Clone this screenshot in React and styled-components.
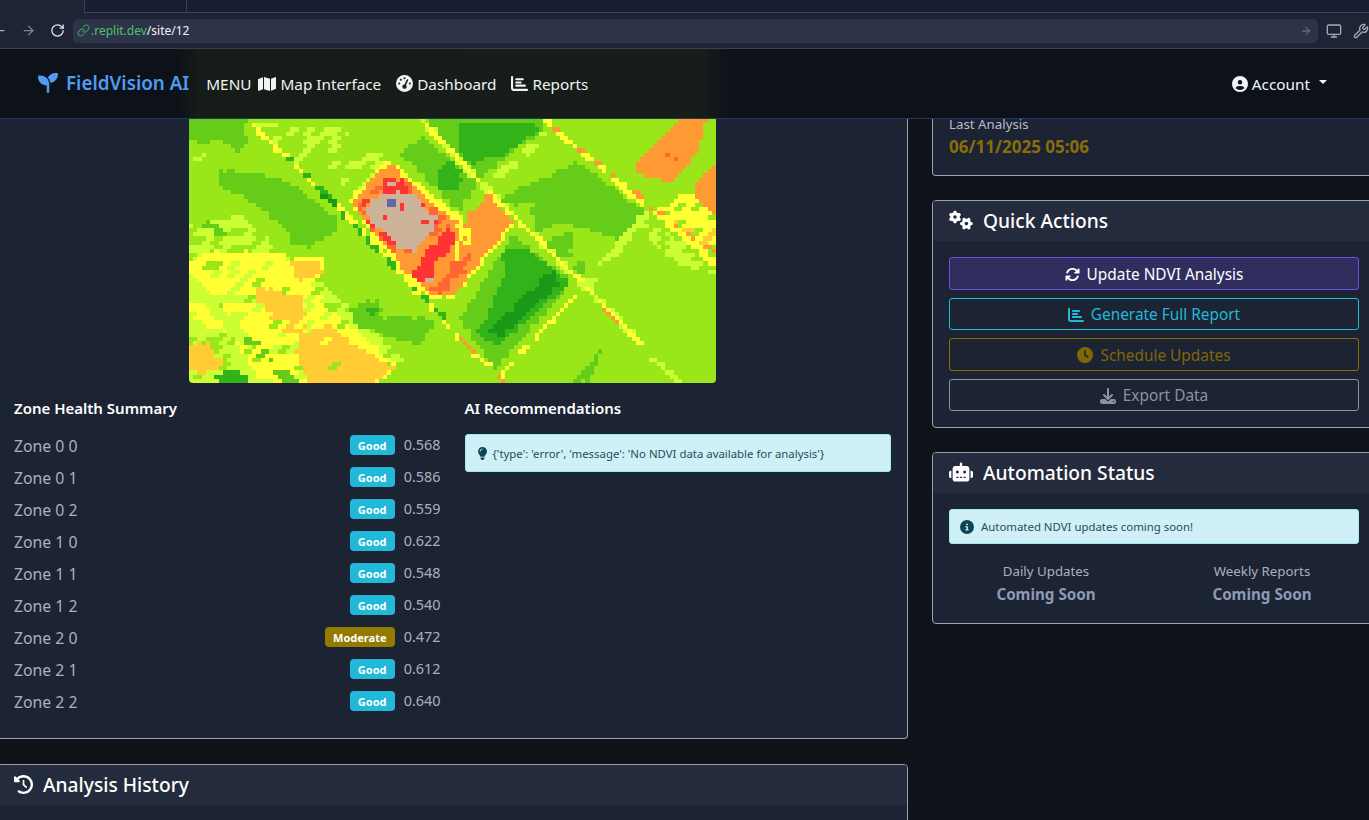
import React from "react";
import styled, { createGlobalStyle } from "styled-components";
import {
  FaSeedling, FaMap, FaGaugeHigh, FaChartBar, FaCircleUser, FaGears, FaArrowsRotate,
  FaClock, FaDownload, FaRobot, FaCircleInfo, FaLightbulb, FaClockRotateLeft,
} from "react-icons/fa6";
import { ArrowLeft, ArrowRight, RotateCw, Link, Monitor, Wrench } from "lucide-react";

const GlobalStyle = createGlobalStyle`
  html, body { margin: 0; padding: 0; background: #0f1219; overflow: hidden; }
  * { box-sizing: border-box; }
  body { font-family: "Noto Sans", "Liberation Sans", sans-serif; }
`;

// ndvi map colours
const L = "#99e619", G = "#66cc1a", D = "#33b31a", V = "#1a9919", A = "#ccff33", Y = "#ffff33";
const P = "#ffcc33", O = "#ff9933", E = "#ff6633", R = "#ff3333", T = "#ccb399", B = "#6666aa";

const tan = [[525,270],[570,222],[660,222],[740,310],[700,355],[670,398],[625,398],[580,340],[530,300]];

const layers = [
  { c: A, p: [[180,10],[430,10],[600,130],[520,230],[300,120]], n: 0.3 },
  { c: A, p: [[0,320],[150,290],[400,500],[640,730],[520,795],[0,795]], n: 0.65 },
  { c: A, p: [[1340,300],[1560,430],[1560,470],[1450,440],[1340,340]], n: 0.6 },
  { c: A, p: [[0,130],[60,100],[90,130],[30,170]], n: 0.4 },
  { c: G, p: [[0,0],[170,0],[170,70],[148,100],[80,60],[40,80],[0,60]] },
  { c: G, p: [[90,160],[170,160],[300,190],[435,300],[435,340],[360,385],[300,370],[300,340],[180,250],[90,200]] },
  { c: G, p: [[625,100],[690,50],[855,190],[800,285],[735,210]] },
  { c: G, p: [[705,0],[1050,0],[1050,30],[860,175],[700,30]] },
  { c: D, p: [[800,10],[1030,10],[1030,40],[930,110],[830,135],[800,100]] },
  { c: D, p: [[735,150],[770,125],[810,155],[800,210],[740,210]] },
  { c: G, p: [[920,240],[1150,130],[1350,280],[1270,360],[1090,310],[1020,350],[1015,250],[960,260]] },
  { c: G, p: [[1050,370],[1130,340],[1130,420],[1090,410]] },
  { c: G, p: [[1140,430],[1170,430],[1175,475],[1150,475]] },
  { c: G, p: [[805,600],[960,350],[1135,490],[910,750],[850,680]] },
  { c: D, p: [[930,390],[1000,390],[1130,490],[910,690],[850,640],[880,600],[930,480]] },
  { c: V, p: [[880,640],[1080,450],[1090,500],[920,660]] },
  { c: G, p: [[480,570],[560,540],[570,610],[500,640]] },
  { c: D, p: [[520,565],[555,565],[555,585],[525,585]] },
  { c: G, p: [[530,620],[620,590],[740,610],[680,680],[590,660]] },
  { c: G, p: [[1140,790],[1230,680],[1210,730],[1180,790]] },
  { c: G, p: [[0,270],[110,340],[130,395],[60,340],[0,300]], n: 0.6 },
  { c: Y, p: [[0,430],[60,400],[190,400],[400,420],[400,560],[520,660],[620,750],[560,795],[220,795],[120,660],[0,590]], n: 0.78 },
  { c: P, p: [[300,430],[390,430],[390,470],[320,490]] },
  { c: P, p: [[200,500],[340,540],[350,640],[270,640],[200,540]], n: 0.8 },
  { c: P, p: [[330,640],[420,620],[500,690],[610,750],[540,795],[350,795],[320,700]], n: 0.92 },
  { c: P, p: [[0,680],[60,670],[100,740],[40,770],[0,750]] },
  { c: A, l: [[0,490],[170,670]], w: 18, n: 0.8 },
  { c: G, l: [[180,670],[300,790]], w: 16, n: 0.8 },
  { c: D, l: [[105,785],[150,785]], w: 22 },
  { c: Y, p: [[1380,280],[1560,170],[1560,400],[1500,400]], n: 0.72 },
  { c: O, p: [[1310,150],[1450,0],[1535,0],[1510,90],[1430,190],[1350,180]] },
  { c: O, p: [[1500,190],[1560,140],[1560,300],[1500,230]] },
  { c: P, p: [[1430,300],[1560,330],[1560,380],[1500,380]], n: 0.35 },
  { c: E, p: [[1410,100],[1450,100],[1450,125],[1410,125]], n: 0.35 },
  { c: A, l: [[700,15],[880,210],[1180,510],[1340,680]], w: 10, n: 0.7 },
  { c: Y, l: [[180,10],[500,320],[760,620],[930,790]], w: 7, n: 0.85 },
  { c: Y, l: [[700,15],[880,210],[1180,510],[1340,680]], w: 6, n: 0.92 },
  { c: Y, l: [[1060,10],[1560,440]], w: 8, n: 0.9 },
  { c: O, l: [[1060,10],[1400,290],[1560,400]], w: 6, n: 0.4 },
  { c: Y, l: [[955,320],[780,530]], w: 7 },
  { c: A, l: [[880,210],[1050,50]], w: 12, n: 0.85 },
  { c: A, l: [[1170,510],[1350,290]], w: 12, n: 0.85 },
  { c: Y, l: [[1165,510],[910,780]], w: 6, n: 0.75 },
  { c: O, l: [[760,620],[930,790]], w: 5, n: 0.5 },
  { c: O, l: [[1175,510],[1290,640]], w: 5, n: 0.4 },
  { c: D, l: [[280,100],[430,250]], w: 8, n: 0.6 },
  { c: V, l: [[400,230],[435,255]], w: 7 },
  { c: D, l: [[450,285],[760,600]], w: 7, n: 0.55 },
  { c: A, l: [[1370,720],[1450,790]], w: 8 },
  { c: Y, p: [[470,250],[590,120],[810,300],[820,400],[770,540],[720,540],[640,480]] },
  { c: O, p: [[480,250],[590,135],[795,315],[790,420],[770,530],[720,530],[650,470]] },
  { c: O, p: [[815,300],[890,225],[955,310],[780,530],[730,520],[800,420]] },
  { c: E, p: [[770,440],[830,400],[840,430],[790,490]], n: 0.6 },
  { c: E, p: [[720,510],[780,460],[780,520],[740,530]], n: 0.7 },
  { c: E, p: [[500,260],[570,190],[650,190],[780,320],[720,400],[620,410],[530,330]], n: 0.55 },
  { c: R, p: [[570,220],[580,185],[640,185],[645,222]] },
  { c: R, p: [[520,235],[550,235],[530,265],[520,265]] },
  { c: R, p: [[660,470],[700,405],[770,330],[795,340],[770,400],[730,440],[720,495],[680,495]] },
  { c: R, p: [[525,300],[590,345],[610,380],[640,400],[600,395],[540,330]], n: 0.8 },
  { c: T, p: tan },
  { c: R, p: tan, n: 0.06, fine: true },
  { c: R, p: [[690,290],[745,310],[700,350],[680,320]], n: 0.3, fine: true },
  { c: T, p: [[695,475],[720,475],[720,487],[695,487]], j: 0 },
  { c: B, p: [[586,235],[610,248],[610,262],[586,258]], j: 0 },
  { c: T, p: [[590,185],[610,185],[610,197],[590,197]], j: 0 },
  { c: Y, p: [[800,330],[840,330],[835,380],[800,385]], n: 0.7 },
];

const hash = (a, b) => {
  const s = Math.sin(a * 127.1 + b * 311.7) * 43758.5453;
  return s - Math.floor(s);
};

const inPoly = (x, y, p) => {
  let hit = false;
  for (let i = 0, j = p.length - 1; i < p.length; j = i++) {
    if (p[i][1] > y !== p[j][1] > y && x < ((p[j][0] - p[i][0]) * (y - p[i][1])) / (p[j][1] - p[i][1]) + p[i][0]) hit = !hit;
  }
  return hit;
};

const nearLine = (x, y, pts, w) => {
  for (let i = 0; i < pts.length - 1; i++) {
    const [ax, ay] = pts[i], [bx, by] = pts[i + 1];
    const t = Math.max(0, Math.min(1, ((x - ax) * (bx - ax) + (y - ay) * (by - ay)) / ((bx - ax) ** 2 + (by - ay) ** 2)));
    if (Math.hypot(x - ax - t * (bx - ax), y - ay - t * (by - ay)) < w) return true;
  }
  return false;
};

const COLS = 125, ROWS = 63, CW = 1560 / COLS, CH = 795 / ROWS;

const buildCells = () => {
  const cells = [];
  for (let r = 0; r < ROWS; r++) {
    let start = 0, prev = null;
    for (let c = 0; c <= COLS; c++) {
      let col = L;
      if (c < COLS) {
        layers.forEach((lay, i) => {
          const j = lay.j === undefined ? 8 : lay.j;
          const x = c * CW + CW / 2 + (hash(c, r) - 0.5) * j;
          const y = r * CH + CH / 2 + (hash(r + 7, c + 3) - 0.5) * j;
          const on = lay.p ? inPoly(x, y, lay.p) : nearLine(x, y, lay.l, lay.w);
          // patches come in clumps of two cells, only the speckles are single cells
          const nx = lay.fine ? c : Math.floor((c + (r % 2)) / 2);
          const ny = lay.fine ? r : Math.floor(r / 2);
          if (on && (lay.n === undefined || hash(nx + i * 13, ny + i * 5) < lay.n)) col = lay.c;
        });
      } else col = null;
      if (col !== prev) {
        if (prev) cells.push({ x: start * CW, y: r * CH, w: (c - start) * CW, c: prev });
        start = c;
        prev = col;
      }
    }
  }
  return cells;
};

const mapCells = buildCells();

const zones = [
  ["Zone 0 0", "Good", "0.568"], ["Zone 0 1", "Good", "0.586"], ["Zone 0 2", "Good", "0.559"],
  ["Zone 1 0", "Good", "0.622"], ["Zone 1 1", "Good", "0.548"], ["Zone 1 2", "Good", "0.540"],
  ["Zone 2 0", "Moderate", "0.472"], ["Zone 2 1", "Good", "0.612"], ["Zone 2 2", "Good", "0.640"],
];

const Screen = styled.div`
  width: 1369px;
  height: 820px;
  overflow: hidden;
  background: #0f1219;
  color: #fff;
`;

const TabStrip = styled.div`
  height: 13px;
  display: flex;
  background: #191f30;
`;

const ActiveTab = styled.div`
  width: 85px;
  background: #1e2435;
  border-right: 1px solid #3a4156;
`;

const Tab = styled.div`
  width: 102px;
  border-right: 1px solid #3a4156;
  border-bottom: 1px solid #3a4156;
`;

const TabRest = styled.div`
  flex: 1;
  border-bottom: 1px solid #3a4156;
`;

const Toolbar = styled.div`
  height: 36px;
  display: flex;
  align-items: center;
  background: #1e2435;
  border-bottom: 1px solid #3a4156;
`;

const BackSlot = styled.div`
  width: 73px;
  display: flex;
  align-items: center;
  gap: 14px;
  margin-left: -8px;
  flex-shrink: 0;
`;

const UrlBox = styled.div`
  width: 1246px;
  height: 24px;
  margin-left: 8px;
  border-radius: 5px;
  background: #2d3348;
  display: flex;
  align-items: center;
  padding: 0 6px 0 4px;
  font-size: 12px;
`;

const UrlHost = styled.span`
  color: #4fc16a;
  margin-left: 1px;
`;

const UrlPath = styled.span`
  color: #f2f4f8;
  flex: 1;
`;

const ToolIcons = styled.div`
  display: flex;
  align-items: center;
  gap: 11px;
  margin-left: 8px;
  flex-shrink: 0;
`;

const NavBar = styled.nav`
  height: 70px;
  display: flex;
  align-items: center;
  padding: 0 42px 0 38px;
  background: linear-gradient(90deg, #0d1119 176px, #161d19 200px, #171e19 700px, #0d1119 730px);
  border-bottom: 1px solid #1e3a5f;
`;

const Brand = styled.div`
  display: flex;
  align-items: center;
  gap: 8px;
  color: #4f9cf0;
  font-size: 18.8px;
  font-weight: 600;
  margin-right: 17px;
  margin-top: -2px;
`;

const NavItem = styled.div`
  display: flex;
  align-items: center;
  gap: 4px;
  margin-right: 15px;
  font-size: 15.3px;
  color: #f1f3f6;
  svg { flex-shrink: 0; }
`;

const MenuLabel = styled(NavItem)`
  margin-right: 7px;
`;

const Account = styled(NavItem)`
  margin: 0 0 0 auto;
`;

const Caret = styled.span`
  width: 0;
  height: 0;
  margin: 0 0 3px 5px;
  border-left: 4px solid transparent;
  border-right: 4px solid transparent;
  border-top: 4px solid #f1f3f6;
`;

const Content = styled.div`
  display: grid;
  grid-template-columns: 911px 444px;
  column-gap: 24px;
  margin-left: -3px;
  align-items: start;
`;

const Column = styled.div`
  display: flex;
  flex-direction: column;
`;

const Card = styled.section`
  background: #1c2333;
  border: 1px solid #9aa3b5;
  border-radius: 4px;
  margin-bottom: ${(p) => p.$gap || 24}px;
  overflow: hidden;
`;

const OpenCard = styled(Card)`
  border-top: none;
  border-radius: 0 0 4px 4px;
  overflow: visible;
`;

const CardHeader = styled.header`
  height: 40px;
  display: flex;
  align-items: center;
  gap: 10px;
  padding: 0 16px 2px;
  background: #242b3c;
  font-size: 19.2px;
  font-weight: 500;
  color: #fff;
`;

const MainBody = styled.div`
  padding: 0 16px 20px;
`;

const NdviMap = styled.svg`
  display: block;
  width: 527px;
  height: 264px;
  margin: 0 auto;
  border-radius: 0 0 4px 4px;
`;

const Split = styled.div`
  display: grid;
  grid-template-columns: 1fr 1fr;
  column-gap: 24px;
  margin-top: 13px;
`;

const SubTitle = styled.h6`
  margin: 0 0 14px;
  font-size: 15px;
  line-height: 24px;
  font-weight: 600;
  color: #fff;
`;

const ZoneList = styled.div`
  margin-top: -4px;
`;

const ZoneRow = styled.div`
  height: 32px;
  display: flex;
  align-items: center;
  font-size: 15.8px;
  color: #aab1bd;
`;

const ZoneName = styled.span`
  flex: 1;
`;

const Badge = styled.span`
  height: 20px;
  display: flex;
  align-items: center;
  padding: 0 8px;
  margin-top: -2px;
  border-radius: 4px;
  font-size: 11px;
  font-weight: 700;
  color: #fff;
  background: ${(p) => (p.$kind === "Moderate" ? "#957a00" : "#22b8d8")};
`;

const ZoneValue = styled.span`
  width: 46px;
  text-align: right;
  font-size: 14.4px;
  margin-top: -4px;
`;

const Alert = styled.div`
  display: flex;
  align-items: center;
  gap: ${(p) => p.$gap}px;
  border: 1px solid #9eeaf9;
  border-radius: 3px;
  background: #d0f0f7;
  color: #1f4e5f;
  font-size: 11.4px;
  padding: 0 8px 0 10px;
  height: ${(p) => p.$h}px;
  svg { color: #0b4557; flex-shrink: 0; }
`;

const SideBody = styled.div`
  padding: 16px;
`;

const LastBody = styled.div`
  padding: 0 16px 16px;
`;

const MutedLabel = styled.div`
  font-size: 13.3px;
  line-height: 11px;
  color: #b8bdc8;
`;

const DateValue = styled.div`
  margin-top: 5px;
  font-size: 17px;
  line-height: 24px;
  font-weight: 700;
  color: #8a6d0a;
`;

const ActionList = styled.div`
  display: flex;
  flex-direction: column;
  gap: 8px;
`;

const ActionButton = styled.button`
  height: 32.5px;
  display: flex;
  align-items: center;
  justify-content: center;
  gap: 7px;
  padding: 2px 0 0;
  border-radius: 3px;
  font-family: inherit;
  font-size: 15.4px;
  border: 1px solid ${(p) => p.$line};
  color: ${(p) => p.$text};
  background: ${(p) => p.$fill || "transparent"};
`;

const StatGrid = styled.div`
  display: grid;
  grid-template-columns: 216px 216px;
  margin: 17px -11px 0;
  text-align: center;
`;

const StatLabel = styled.div`
  font-size: 13.3px;
  line-height: 20px;
  color: #aab1bd;
`;

const StatValue = styled.div`
  font-size: 15.2px;
  line-height: 26px;
  font-weight: 700;
  color: #8d9ab5;
`;

const HistoryCard = styled(Card)`
  height: 120px;
`;

const Stat = ({ label }) => (
  <div>
    <StatLabel>{label}</StatLabel>
    <StatValue>Coming Soon</StatValue>
  </div>
);

const App = () => {
  return (
    <Screen>
      <GlobalStyle />
      <TabStrip>
        <ActiveTab />
        <Tab />
        <TabRest />
      </TabStrip>
      <Toolbar>
        <BackSlot>
          <ArrowLeft size={15} color="#aab0bf" />
          <ArrowRight size={15} color="#7d8496" />
          <RotateCw size={15} color="#e6e8ee" />
        </BackSlot>
        <UrlBox>
          <Link size={13} color="#3f9c58" />
          <UrlHost>.replit.dev</UrlHost>
          <UrlPath>/site/12</UrlPath>
          <ArrowRight size={12} color="#7d8496" />
        </UrlBox>
        <ToolIcons>
          <Monitor size={16} color="#a3a9b8" />
          <Wrench size={16} color="#a3a9b8" />
        </ToolIcons>
      </Toolbar>
      <NavBar>
        <Brand>
          <FaSeedling size={20} />
          FieldVision AI
        </Brand>
        <MenuLabel>MENU</MenuLabel>
        <NavItem>
          <FaMap size={18} />
          Map Interface
        </NavItem>
        <NavItem>
          <FaGaugeHigh size={17} />
          Dashboard
        </NavItem>
        <NavItem>
          <FaChartBar size={17} />
          Reports
        </NavItem>
        <Account>
          <FaCircleUser size={16} />
          Account
          <Caret />
        </Account>
      </NavBar>
      <Content>
        <Column>
          <OpenCard $gap={25}>
            <MainBody>
              <NdviMap viewBox="0 0 1560 795" preserveAspectRatio="none" shapeRendering="crispEdges">
                {mapCells.map((cell, i) => (
                  <rect key={i} x={cell.x} y={cell.y} width={cell.w} height={CH + 0.5} fill={cell.c} />
                ))}
              </NdviMap>
              <Split>
                <div>
                  <SubTitle>Zone Health Summary</SubTitle>
                  <ZoneList>
                    {zones.map(([name, status, value]) => (
                      <ZoneRow key={name}>
                        <ZoneName>{name}</ZoneName>
                        <Badge $kind={status}>{status}</Badge>
                        <ZoneValue>{value}</ZoneValue>
                      </ZoneRow>
                    ))}
                  </ZoneList>
                </div>
                <div>
                  <SubTitle>AI Recommendations</SubTitle>
                  <Alert $h={38} $gap={4}>
                    <FaLightbulb size={13} />
                    {"{'type': 'error', 'message': 'No NDVI data available for analysis'}"}
                  </Alert>
                </div>
              </Split>
            </MainBody>
          </OpenCard>
          <HistoryCard>
            <CardHeader>
              <FaClockRotateLeft size={19} />
              Analysis History
            </CardHeader>
          </HistoryCard>
        </Column>
        <Column>
          <OpenCard>
            <LastBody>
              <MutedLabel>Last Analysis</MutedLabel>
              <DateValue>06/11/2025 05:06</DateValue>
            </LastBody>
          </OpenCard>
          <Card>
            <CardHeader>
              <FaGears size={24} />
              Quick Actions
            </CardHeader>
            <SideBody>
              <ActionList>
                <ActionButton $line="#6d50e0" $text="#fff" $fill="#2f2e5f">
                  <FaArrowsRotate size={15} />
                  Update NDVI Analysis
                </ActionButton>
                <ActionButton $line="#22b8d8" $text="#22b8d8">
                  <FaChartBar size={16} />
                  Generate Full Report
                </ActionButton>
                <ActionButton $line="#8a6d00" $text="#806606">
                  <FaClock size={16} />
                  Schedule Updates
                </ActionButton>
                <ActionButton $line="#8a93a5" $text="#8a93a5">
                  <FaDownload size={16} />
                  Export Data
                </ActionButton>
              </ActionList>
            </SideBody>
          </Card>
          <Card>
            <CardHeader>
              <FaRobot size={24} />
              Automation Status
            </CardHeader>
            <SideBody>
              <Alert $h={35} $gap={7}>
                <FaCircleInfo size={14} />
                Automated NDVI updates coming soon!
              </Alert>
              <StatGrid>
                <Stat label="Daily Updates" />
                <Stat label="Weekly Reports" />
              </StatGrid>
            </SideBody>
          </Card>
        </Column>
      </Content>
    </Screen>
  );
};

export default App;
